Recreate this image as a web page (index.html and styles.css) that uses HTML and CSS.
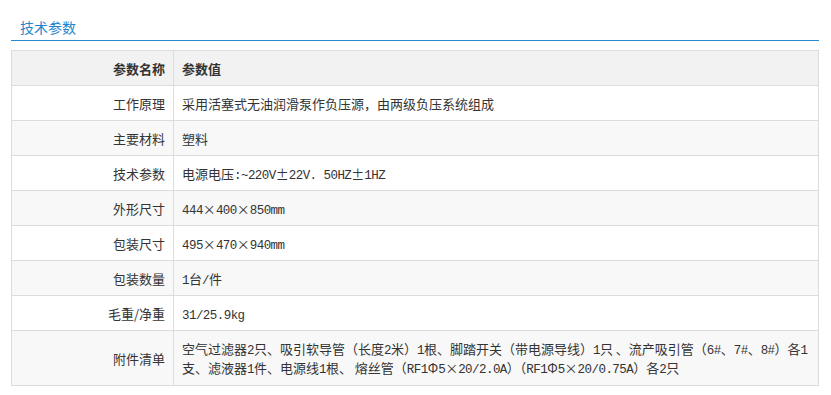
FILE: index.html
```html
<!DOCTYPE html>
<html lang="zh-CN">
<head>
<meta charset="utf-8">
<title>技术参数</title>
<link rel="stylesheet" href="styles.css">
</head>
<body>
<div class="section">
  <div class="section-title"><span>技术参数</span></div>
  <table class="params">
    <thead>
      <tr><th class="name">参数名称</th><th class="val">参数值</th></tr>
    </thead>
    <tbody>
      <tr><td class="name">工作原理</td><td class="val">采用活塞式无油润滑泵作负压源，由两级负压系统组成</td></tr>
      <tr><td class="name">主要材料</td><td class="val">塑料</td></tr>
      <tr><td class="name">技术参数</td><td class="val">电源电压<span class="en">:~220V</span>±<span class="en">22V. 50HZ</span>±<span class="en">1HZ</span></td></tr>
      <tr><td class="name">外形尺寸</td><td class="val"><span class="en">444</span>×<span class="en">400</span>×<span class="en">850mm</span></td></tr>
      <tr><td class="name">包装尺寸</td><td class="val"><span class="en">495</span>×<span class="en">470</span>×<span class="en">940mm</span></td></tr>
      <tr><td class="name">包装数量</td><td class="val"><span class="en">1</span>台<span class="en">/</span>件</td></tr>
      <tr><td class="name">毛重/净重</td><td class="val"><span class="en">31/25.9kg</span></td></tr>
      <tr class="tall"><td class="name">附件清单</td><td class="val">空气过滤器<span class="en">2</span>只、吸引软导管（长度<span class="en">2</span>米）<span class="en">1</span>根、脚踏开关（带电源导线）<span class="en">1</span>只 、流产吸引管（<span class="en">6#</span>、<span class="en">7#</span>、<span class="en">8#</span>）各<span class="en">1</span><br>支、滤液器<span class="en">1</span>件、电源线<span class="en">1</span>根、 熔丝管（<span class="en">RF1</span>Φ<span class="en">5</span>×<span class="en">20/2.0A</span>）（<span class="en">RF1</span>Φ<span class="en">5</span>×<span class="en">20/0.75A</span>）各<span class="en">2</span>只</td></tr>
    </tbody>
  </table>
</div>
</body>
</html>
```
FILE: styles.css
```css
html, body {
  margin: 0;
  padding: 0;
  background: #fff;
}
body {
  font-family: "Noto Sans CJK SC", sans-serif;
  font-size: 13px;
  color: #333;
}
.section {
  padding: 0 12px 0 11px;
}
.section-title {
  height: 41px;
  box-sizing: border-box;
  padding: 17px 0 0 9px;
  border-bottom: 1px solid #2a8ad0;
  font-size: 14px;
  line-height: 20px;
  color: #2585cc;
}
.params {
  margin-top: 9px;
  width: 100%;
  border-collapse: collapse;
  border: 1px solid #dcdcdc;
}
.params th, .params td {
  border: 1px solid #dcdcdc;
  height: 35px;
  padding: 0 8px;
  box-sizing: border-box;
  line-height: 19px;
  vertical-align: middle;
  font-size: 13px;
}
.params .name {
  width: 162px;
  text-align: right;
}
.params .val {
  text-align: left;
}
.params .en {
  font-family: "Liberation Mono", monospace;
  font-size: 12.5px;
  letter-spacing: -0.55px;
  line-height: 1;
}
.params th {
  background: #f2f2f2;
  font-weight: bold;
  color: #333;
}
.params tbody tr:nth-child(even) td {
  background: #f8f8f8;
}
.params tr.tall td {
  height: 55px;
  padding-top: 7px;
  padding-bottom: 7px;
}
.params tr.tall td.val {
  white-space: nowrap;
}
```
